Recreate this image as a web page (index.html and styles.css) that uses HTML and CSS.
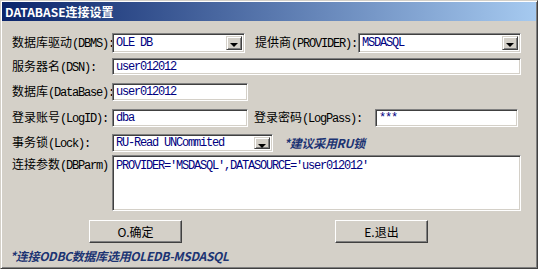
FILE: index.html
```html
<!DOCTYPE html>
<html lang="zh-CN">
<head>
  <meta charset="UTF-8">
  <title>DATABASE连接设置</title>
  <link rel="stylesheet" href="styles.css">
</head>
<body>
  <div class="window">
    <div class="titlebar">DATABASE连接设置</div>
    <div class="content">
      <div class="row r1">
        <div class="label">数据库驱动<span class="en">(DBMS):</span></div>
        <div class="field combo w133"><span>OLE DB</span><i class="drop"></i></div>
        <div class="label lbl2">提供商<span class="en">(PROVIDER):</span></div>
        <div class="field combo w163"><span>MSDASQL</span><i class="drop"></i></div>
      </div>
      <div class="row r2">
        <div class="label">服务器名<span class="en">(DSN):</span></div>
        <div class="field w409"><span>user012012</span></div>
      </div>
      <div class="row r3">
        <div class="label">数据库<span class="en">(DataBase):</span></div>
        <div class="field w136"><span>user012012</span></div>
      </div>
      <div class="row r4">
        <div class="label">登录账号<span class="en">(LogID):</span></div>
        <div class="field w136"><span>dba</span></div>
        <div class="label lbl3">登录密码<span class="en">(LogPass):</span></div>
        <div class="field w143"><span>***</span></div>
      </div>
      <div class="row r5">
        <div class="label">事务锁<span class="en">(Lock):</span></div>
        <div class="field combo w161"><span>RU-Read UNCommited</span><i class="drop"></i></div>
        <div class="hint tip">*建议采用RU锁</div>
      </div>
      <div class="row r6">
        <div class="label">连接参数<span class="en">(DBParm)</span></div>
        <div class="field area w409"><span>PROVIDER='MSDASQL',DATASOURCE='user012012'</span></div>
      </div>
      <div class="buttons">
        <div class="btn ok">O.确定</div>
        <div class="btn quit">E.退出</div>
      </div>
      <div class="hint foot">*连接ODBC数据库选用OLEDB-MSDASQL</div>
    </div>
  </div>
</body>
</html>
```

FILE: styles.css
```css
body { margin: 0; background: #fff; font-family: "Noto Sans CJK SC", "Liberation Sans", sans-serif; font-size: 12px; color: #000; }
.window { width: 538px; height: 269px; box-sizing: border-box; background: #d4d0c8; padding: 1px; border: 1px solid; border-color: #d4d0c8 #404040 #404040 #d4d0c8; box-shadow: inset 1px 1px #fff, inset -1px -1px #808080; }
.titlebar { height: 19px; line-height: 19px; padding-left: 3px; color: #fff; font-weight: bold; font-size: 12px; background: linear-gradient(to right, #0a246a, #a6caf0); }
.content { padding: 12px 0 0 10px; }
.row { display: flex; align-items: center; }
.r1 { height: 20px; }
.r2 { height: 17px; margin-top: 5px; }
.r3 { height: 18px; margin-top: 8px; }
.r4 { height: 18px; margin-top: 8px; }
.r5 { height: 18px; margin-top: 7px; }
.r6 { height: 56px; margin-top: 3px; align-items: flex-start; }
.label { width: 100px; line-height: 14px; white-space: nowrap; }
.en { font-family: "Liberation Mono", monospace; font-size: 12px; letter-spacing: -1.2px; }
.r6 .label { padding-top: 2px; }
.lbl2 { width: 103px; margin-left: 10px; }
.lbl3 { width: 121px; margin-left: 6px; }
.field { position: relative; height: 100%; box-sizing: border-box; background: #fff; border: 1px solid; border-color: #808080 #fff #fff #808080; box-shadow: inset 1px 1px #404040, inset -1px -1px #d4d0c8; padding: 0 3px; display: flex; align-items: center; color: #000080; font-family: "Liberation Mono", "Noto Sans CJK SC", monospace; font-size: 12px; letter-spacing: -1.2px; white-space: nowrap; overflow: hidden; }
.area { align-items: flex-start; padding-top: 3px; }
.w133 { width: 133px; }
.w163 { width: 163px; }
.w409 { width: 409px; }
.w136 { width: 136px; }
.w143 { width: 143px; }
.w161 { width: 161px; }
.drop { position: absolute; right: 2px; top: 2px; bottom: 2px; width: 16px; box-sizing: border-box; background: #d4d0c8; border: 1px solid; border-color: #d4d0c8 #404040 #404040 #d4d0c8; box-shadow: inset 1px 1px #fff, inset -1px -1px #808080; }
.drop::after { content: ""; position: absolute; left: 3px; top: 6px; border-left: 4px solid transparent; border-right: 4px solid transparent; border-top: 4px solid #000; }
.hint { color: #1c3473; font-weight: bold; font-style: italic; line-height: 14px; white-space: nowrap; letter-spacing: -0.3px; }
.tip { margin-left: 11px; }
.buttons { display: flex; margin-top: 9px; padding-left: 77px; }
.btn { width: 93px; height: 23px; box-sizing: border-box; line-height: 21px; text-align: center; background: #d4d0c8; border: 1px solid; border-color: #fff #404040 #404040 #fff; box-shadow: inset -1px -1px #808080; }
.quit { margin-left: 153px; }
.foot { margin-top: 6px; margin-left: -2px; }
```
